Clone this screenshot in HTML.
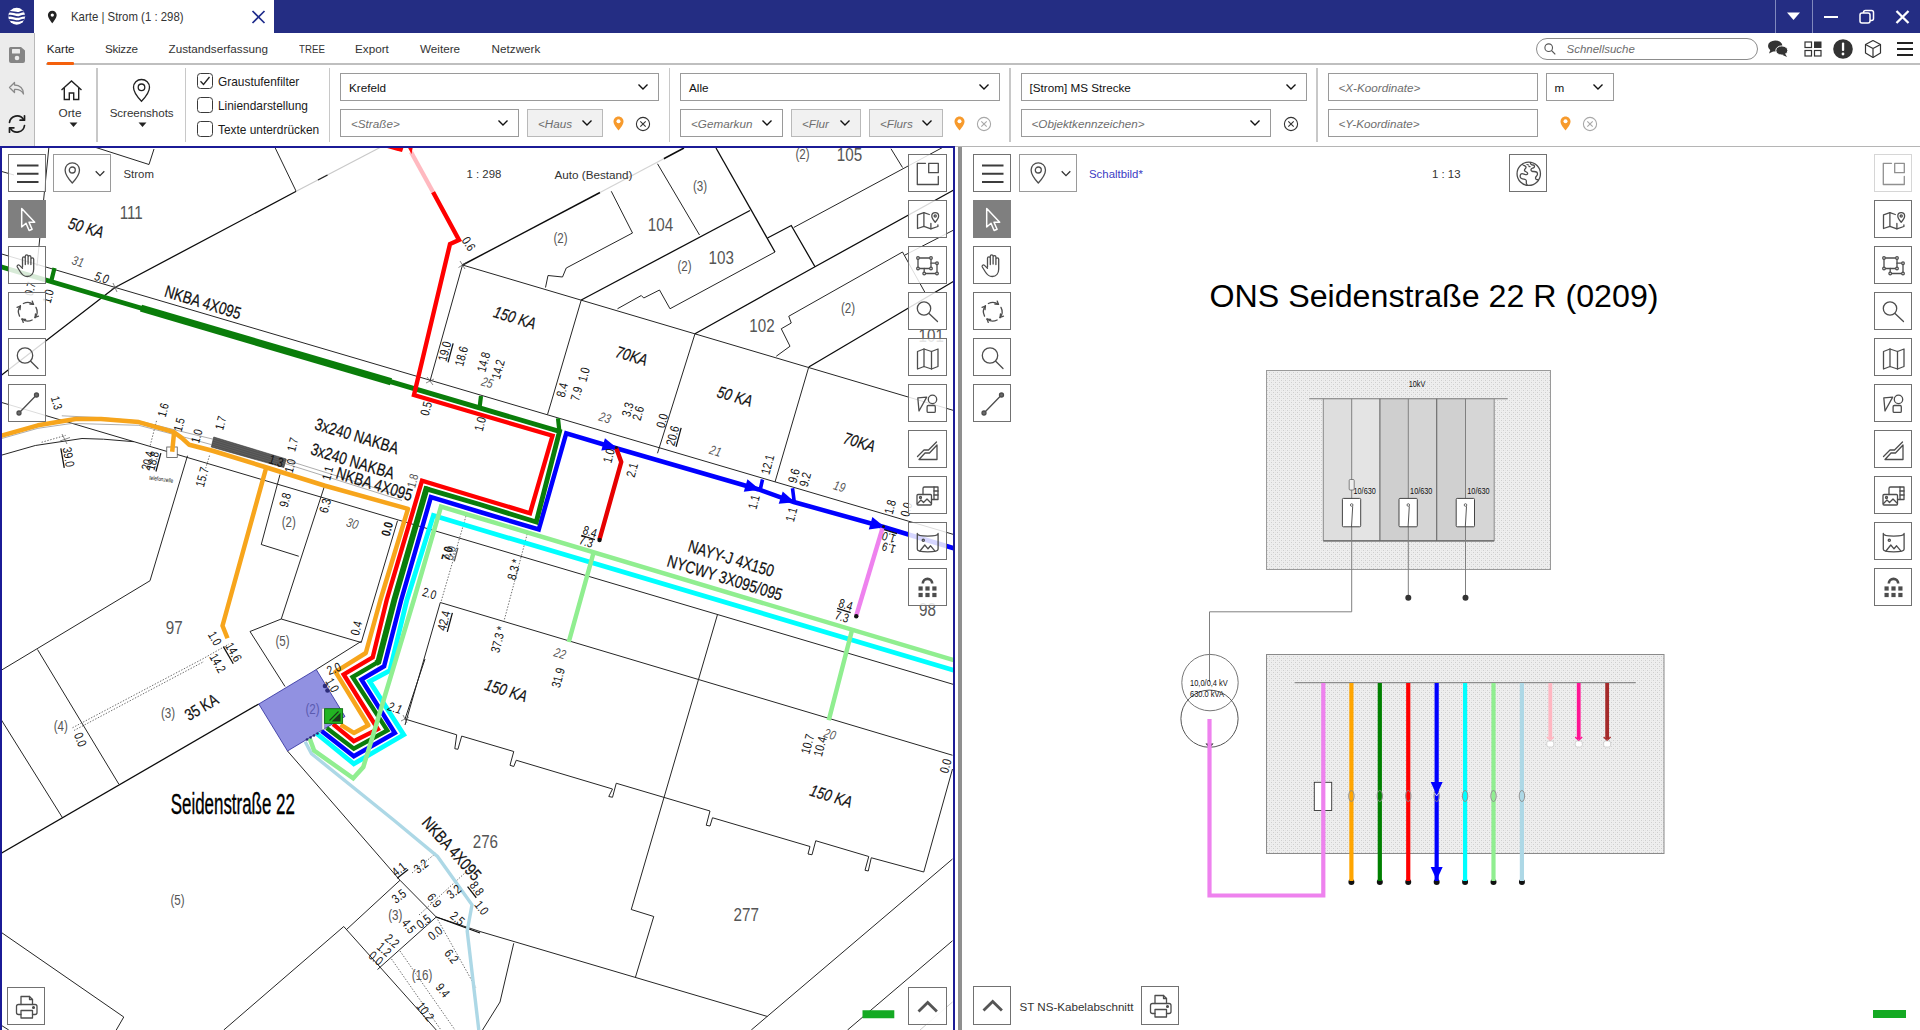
<!DOCTYPE html>
<html lang="de">
<head>
<meta charset="utf-8">
<title>Karte | Strom (1 : 298)</title>
<style>
*{box-sizing:border-box;margin:0;padding:0}
html,body{width:1920px;height:1030px;overflow:hidden;background:#fff}
body{position:relative;font-family:"Liberation Sans",sans-serif;color:#2b2b2b;font-size:11.6px}
.abs{position:absolute}
#titlebar{left:0;top:0;width:1920px;height:33px;background:#242d83}
#tab{left:34px;top:0;width:240px;height:33px;background:#fff}
#sidebar{left:0;top:33px;width:34.6px;height:113px;background:#ececec;border-right:1.3px solid #b9b9b9}
.menu span{position:absolute;top:42px;white-space:nowrap;font-size:11.7px;color:#333}
#menuline{left:46px;top:62.9px;width:1874px;height:1.8px;background:#bfbfbf}
#menuactive{left:46.5px;top:62px;width:27.5px;height:3.3px;background:#f4600c;border-radius:1px}
.vsep{position:absolute;top:68px;width:1.6px;height:74px;background:#c8c8c8}
.dd{position:absolute;border:1px solid #9a9a9a;background:#fff;height:27.5px;font-size:11.7px;color:#111;white-space:nowrap}
.dd.g{background:#f1f1f1;border-color:#b9b9b9}
.dd span{position:absolute;left:8px;top:7px}
.dd i{position:absolute;left:10px;top:6.9px;color:#6e6e6e;font-style:italic}
.dd svg{position:absolute;right:9px;top:8.9px}
.cb{position:absolute;left:197px;width:15.5px;height:15.5px;border:1.2px solid #3a3a3a;border-radius:3.5px;background:#fff}
.cbl{position:absolute;left:218px;font-size:11.9px;color:#1a1a1a;white-space:nowrap}
.tb{position:absolute;width:38.2px;height:38.2px;margin:-.35px 0 0 -.35px;border:1.65px solid #717171;background:rgba(255,255,255,.84)}
.tb.on{background:#7f7f7f;border-color:#7f7f7f}
.tb svg{position:absolute;left:0;top:0}
.lbl{position:absolute;font-size:11.4px;color:#333;white-space:nowrap}
</style>
</head>
<body>
<!-- TITLE BAR -->
<div id="titlebar" class="abs"></div>
<div id="tab" class="abs"></div>
<div id="sidebar" class="abs"></div>
<div id="menuline" class="abs"></div>
<div id="menuactive" class="abs"></div>
<!-- logo -->
<svg class="abs" style="left:6.600px;top:6.200px" width="19.400" height="20.400" viewBox="0 0 20 21">
<defs><clipPath id="lg"><circle cx="10" cy="10.5" r="8.7"/></clipPath></defs>
<circle cx="10" cy="10.5" r="8.7" fill="#fff"/>
<g clip-path="url(#lg)" fill="none" stroke="#242d83" stroke-width="1.7">
<path d="M0 6.6 C5 4.2 9 8.2 13 6.6 S18 5 21 6.2"/>
<path d="M0 10.6 C5 8.2 9 12.6 13 11 S18 9.2 21 10.4"/>
<path d="M0 14.8 C5 12.6 9 16.8 13 15.2 S18 13.4 21 14.6"/>
</g></svg>
<!-- tab -->
<svg class="abs" style="left:47px;top:9.600px" width="10.600" height="14.100" viewBox="0 0 12 16"><path d="M6 .8C3.2.8 1 3 1 5.8c0 3.600 5 9.400 5 9.400s5-5.800 5-9.400C11 3 8.800.8 6 .8zm0 6.900a1.900 1.900 0 1 1 0-3.800 1.900 1.900 0 0 1 0 3.800z" fill="#222"/></svg>
<div class="abs" style="left:70.6px;top:10.4px;font-size:12.2px;color:#333;white-space:nowrap;transform:scaleX(.935);transform-origin:0 0">Karte | Strom (1 : 298)</div>
<svg class="abs" style="left:251px;top:10px" width="15" height="14" viewBox="0 0 15 14"><path d="M1.500 1l12 12M13.500 1l-12 12" stroke="#1f2c8c" stroke-width="1.700" fill="none"/></svg>
<!-- window controls -->
<div class="abs" style="left:1775px;top:0;width:1px;height:33px;background:#8088bd"></div>
<div class="abs" style="left:1812px;top:0;width:1px;height:33px;background:#8088bd"></div>
<svg class="abs" style="left:1786px;top:11px" width="16" height="10" viewBox="0 0 16 10"><path d="M1 1.500h13L7.500 9z" fill="#fff"/></svg>
<div class="abs" style="left:1824px;top:15.5px;width:14px;height:2px;background:#fff"></div>
<svg class="abs" style="left:1859px;top:9px" width="16" height="16" viewBox="0 0 16 16"><rect x="1" y="4" width="10" height="10" rx="2" fill="none" stroke="#fff" stroke-width="1.500"/><path d="M4.500 4V3.500a2 2 0 0 1 2-2H12.500a2 2 0 0 1 2 2V9.500a2 2 0 0 1-2 2H11" fill="none" stroke="#fff" stroke-width="1.500"/></svg>
<svg class="abs" style="left:1895px;top:10px" width="15" height="14" viewBox="0 0 15 14"><path d="M1.500 1l12 12M13.500 1l-12 12" stroke="#fff" stroke-width="2.300" fill="none"/></svg>
<!-- sidebar icons -->
<svg class="abs" style="left:8px;top:46px" width="18" height="18" viewBox="0 0 18 18"><path d="M2.500 1h10.500l4 3.500V15a2 2 0 0 1-2 2H3a2 2 0 0 1-2-2V2.500A1.500 1.500 0 0 1 2.500 1z" fill="#858585"/><rect x="4" y="3" width="8" height="4.500" rx=".5" fill="#ececec"/><circle cx="9" cy="12" r="2.300" fill="#ececec"/></svg>
<svg class="abs" style="left:8px;top:80px" width="18" height="18" viewBox="0 0 18 18"><path d="M6.500 2.500L1.500 7.500l5 5v-3c4-.3 7 .8 9 4.500 0-5.500-3.500-9-9-9z" fill="none" stroke="#8a8a8a" stroke-width="1.300" stroke-linejoin="round"/></svg>
<svg class="abs" style="left:7px;top:114px" width="20" height="20" viewBox="0 0 20 20"><g fill="none" stroke="#1e1e1e" stroke-width="1.700" stroke-linecap="round" stroke-linejoin="round"><path d="M2.500 8.500A7.600 7.600 0 0 1 16.500 5.500"/><path d="M17.500 1.800v4.400h-4.400"/><path d="M17.500 11.500A7.600 7.600 0 0 1 3.500 14.500"/><path d="M2.500 18.200v-4.400h4.400"/></g></svg>
<!-- menu -->
<div class="menu">
<span style="left:46.7px;color:#222">Karte</span><span style="left:105px;letter-spacing:-.3px">Skizze</span><span style="left:168.6px">Zustandserfassung</span><span style="left:298.6px;transform:scaleX(.83);transform-origin:0 0">TREE</span><span style="left:355px">Export</span><span style="left:420px">Weitere</span><span style="left:491.6px">Netzwerk</span>
</div>
<!-- search -->
<div class="abs" style="left:1536px;top:38px;width:221.500px;height:22px;border:1px solid #8c8c8c;border-radius:11px;background:#fff"></div>
<svg class="abs" style="left:1543px;top:42px" width="14" height="14" viewBox="0 0 14 14"><circle cx="5.700" cy="5.700" r="3.800" fill="none" stroke="#555" stroke-width="1.100"/><path d="M8.500 8.500l3.800 3.800" stroke="#555" stroke-width="1.100"/></svg>
<div class="abs" style="left:1566.5px;top:42.5px;font-size:11.5px;font-style:italic;color:#6b6b6b">Schnellsuche</div>
<!-- top right icons -->
<svg class="abs" style="left:1767px;top:39px" width="22" height="20" viewBox="0 0 22 20"><ellipse cx="8.200" cy="7" rx="7.200" ry="5.600" fill="#333"/><path d="M3.500 10.500L2 14.500l5-2.500z" fill="#333"/><ellipse cx="14.800" cy="11.500" rx="6" ry="4.600" fill="#333" stroke="#fff" stroke-width="1"/><path d="M18 14.500l2 3.500-5-2.300z" fill="#333"/></svg>
<svg class="abs" style="left:1804px;top:41px" width="18" height="16" viewBox="0 0 18 16"><rect x="1" y="1" width="6.500" height="5.500" fill="none" stroke="#333" stroke-width="1.200"/><rect x="10" y=".5" width="7.500" height="6.500" fill="#333"/><rect x="1" y="9.500" width="6.500" height="5.500" fill="none" stroke="#333" stroke-width="1.200"/><rect x="10.500" y="9.500" width="6.500" height="5.500" fill="none" stroke="#333" stroke-width="1.200"/></svg>
<svg class="abs" style="left:1832px;top:38px" width="22" height="22" viewBox="0 0 22 22"><circle cx="11" cy="11" r="9.800" fill="#333"/><rect x="9.900" y="4.500" width="2.300" height="8.500" rx="1" fill="#fff"/><circle cx="11" cy="16" r="1.400" fill="#fff"/></svg>
<svg class="abs" style="left:1863px;top:39px" width="20" height="20" viewBox="0 0 20 20"><g fill="none" stroke="#333" stroke-width="1.200" stroke-linejoin="round"><path d="M10 1.500L17.500 5.500v8.500L10 18.500 2.500 14V5.500z"/><path d="M2.500 5.500L10 9.500l7.500-4M10 9.500v9"/></g></svg>
<svg class="abs" style="left:1896px;top:41px" width="18" height="16" viewBox="0 0 18 16"><path d="M1 2h16M1 8h16M1 14h16" stroke="#222" stroke-width="1.800"/></svg>
<!-- ribbon -->
<svg class="abs" style="left:60px;top:79px" width="23" height="24" viewBox="0 0 23 24"><path d="M1.500 11L11.500 2l10 9M4.300 9v11.500h5v-6.500h4.400v6.500h5V9" fill="none" stroke="#222" stroke-width="1.400" stroke-linejoin="miter"/></svg>
<div class="lbl" style="left:58.5px;top:106px;font-size:11.8px">Orte</div>
<svg class="abs" style="left:68.500px;top:121.700px" width="9" height="5.600" viewBox="0 0 8 5"><path d="M.5.500h7L4 4.500z" fill="#222"/></svg>
<div class="vsep" style="left:96.300px"></div>
<svg class="abs" style="left:132px;top:77.700px" width="19" height="25" viewBox="0 0 19 25"><path d="M9.500 1.500C5 1.500 1.500 5 1.500 9.300c0 5.700 8 14 8 14s8-8.300 8-14C17.500 5 14 1.500 9.500 1.500z" fill="none" stroke="#222" stroke-width="1.300"/><circle cx="9.500" cy="9.300" r="3.300" fill="none" stroke="#222" stroke-width="1.300"/></svg>
<div class="lbl" style="left:109.700px;top:106px;font-size:11.6px;letter-spacing:-.05px">Screenshots</div>
<svg class="abs" style="left:137.500px;top:121.700px" width="9" height="5.600" viewBox="0 0 8 5"><path d="M.5.500h7L4 4.500z" fill="#222"/></svg>
<div class="vsep" style="left:184.700px"></div>
<div class="cb" style="top:73px"></div>
<svg class="abs" style="left:199px;top:75px" width="12" height="12" viewBox="0 0 12 12"><path d="M1.500 6.300l3 3.200L10.500 2" fill="none" stroke="#222" stroke-width="1.300"/></svg>
<div class="cb" style="top:97px"></div>
<div class="cb" style="top:121px"></div>
<div class="cbl" style="top:75px">Graustufenfilter</div>
<div class="cbl" style="top:99px">Liniendarstellung</div>
<div class="cbl" style="top:123px">Texte unterdrücken</div>
<div class="vsep" style="left:328.700px"></div>
<div class="dd" style="left:340px;top:73px;width:319px"><span>Krefeld</span><svg width="12" height="8" viewBox="0 0 12 8"><path d="M1.500 1.500L6 6l4.500-4.500" fill="none" stroke="#111" stroke-width="1.400"/></svg></div>
<div class="dd" style="left:340px;top:109.200px;width:179px"><i>&lt;Straße&gt;</i><svg width="12" height="8" viewBox="0 0 12 8"><path d="M1.500 1.500L6 6l4.500-4.500" fill="none" stroke="#111" stroke-width="1.400"/></svg></div>
<div class="dd g" style="left:527px;top:109.200px;width:76px"><i>&lt;Haus</i><svg width="12" height="8" viewBox="0 0 12 8"><path d="M1.500 1.500L6 6l4.500-4.500" fill="none" stroke="#111" stroke-width="1.400"/></svg></div>
<svg class="abs pin" style="left:613px;top:116px" width="11" height="15" viewBox="0 0 11 15"><path d="M5.500 .5C2.700.5.500 2.700.500 5.400c0 3.500 5 9 5 9s5-5.500 5-9C10.500 2.700 8.300.5 5.500.5z" fill="#f79a2c"/><circle cx="5.500" cy="5.300" r="2" fill="#fff"/></svg>
<svg class="abs" style="left:635px;top:115.500px" width="16" height="16" viewBox="0 0 16 16"><circle cx="8" cy="8" r="6.600" fill="none" stroke="#333" stroke-width="1.100"/><path d="M5.300 5.300l5.400 5.400M10.700 5.300l-5.400 5.400" stroke="#333" stroke-width="1.100"/></svg>
<div class="vsep" style="left:668.800px"></div>
<div class="dd" style="left:680px;top:73px;width:319.500px"><span>Alle</span><svg width="12" height="8" viewBox="0 0 12 8"><path d="M1.500 1.500L6 6l4.500-4.500" fill="none" stroke="#111" stroke-width="1.400"/></svg></div>
<div class="dd" style="left:680px;top:109.200px;width:103px"><i>&lt;Gemarkun</i><svg width="12" height="8" viewBox="0 0 12 8"><path d="M1.500 1.500L6 6l4.500-4.500" fill="none" stroke="#111" stroke-width="1.400"/></svg></div>
<div class="dd g" style="left:791px;top:109.200px;width:70px"><i>&lt;Flur</i><svg width="12" height="8" viewBox="0 0 12 8"><path d="M1.500 1.500L6 6l4.500-4.500" fill="none" stroke="#111" stroke-width="1.400"/></svg></div>
<div class="dd g" style="left:869px;top:109.200px;width:74px"><i>&lt;Flurs</i><svg width="12" height="8" viewBox="0 0 12 8"><path d="M1.500 1.500L6 6l4.500-4.500" fill="none" stroke="#111" stroke-width="1.400"/></svg></div>
<svg class="abs pin" style="left:954px;top:116px" width="11" height="15" viewBox="0 0 11 15"><path d="M5.500 .5C2.700.5.500 2.700.500 5.400c0 3.500 5 9 5 9s5-5.500 5-9C10.500 2.700 8.300.5 5.500.5z" fill="#f79a2c"/><circle cx="5.500" cy="5.300" r="2" fill="#fff"/></svg>
<svg class="abs" style="left:975.500px;top:115.500px" width="16" height="16" viewBox="0 0 16 16"><circle cx="8" cy="8" r="6.600" fill="none" stroke="#a8a8a8" stroke-width="1.100"/><path d="M5.300 5.300l5.400 5.400M10.700 5.300l-5.400 5.400" stroke="#a8a8a8" stroke-width="1.100"/></svg>
<div class="vsep" style="left:1009.200px"></div>
<div class="dd" style="left:1020.500px;top:73px;width:286px"><span>[Strom] MS Strecke</span><svg width="12" height="8" viewBox="0 0 12 8"><path d="M1.500 1.500L6 6l4.500-4.500" fill="none" stroke="#111" stroke-width="1.400"/></svg></div>
<div class="dd" style="left:1020.500px;top:109.200px;width:250px"><i>&lt;Objektkennzeichen&gt;</i><svg width="12" height="8" viewBox="0 0 12 8"><path d="M1.500 1.500L6 6l4.500-4.500" fill="none" stroke="#111" stroke-width="1.400"/></svg></div>
<svg class="abs" style="left:1282.500px;top:115.500px" width="16" height="16" viewBox="0 0 16 16"><circle cx="8" cy="8" r="6.600" fill="none" stroke="#333" stroke-width="1.100"/><path d="M5.300 5.300l5.400 5.400M10.700 5.300l-5.400 5.400" stroke="#333" stroke-width="1.100"/></svg>
<div class="vsep" style="left:1316px"></div>
<div class="dd" style="left:1327.500px;top:73px;width:210px"><i>&lt;X-Koordinate&gt;</i></div>
<div class="dd" style="left:1545.500px;top:73px;width:68px"><span>m</span><svg width="12" height="8" viewBox="0 0 12 8"><path d="M1.500 1.500L6 6l4.500-4.500" fill="none" stroke="#111" stroke-width="1.400"/></svg></div>
<div class="dd" style="left:1327.500px;top:109.200px;width:210px"><i>&lt;Y-Koordinate&gt;</i></div>
<svg class="abs pin" style="left:1560px;top:116px" width="11" height="15" viewBox="0 0 11 15"><path d="M5.500 .5C2.700.5.500 2.700.500 5.400c0 3.500 5 9 5 9s5-5.500 5-9C10.500 2.700 8.300.5 5.500.5z" fill="#f79a2c"/><circle cx="5.500" cy="5.300" r="2" fill="#fff"/></svg>
<svg class="abs" style="left:1581.500px;top:115.500px" width="16" height="16" viewBox="0 0 16 16"><circle cx="8" cy="8" r="6.600" fill="none" stroke="#a8a8a8" stroke-width="1.100"/><path d="M5.300 5.300l5.400 5.400M10.700 5.300l-5.400 5.400" stroke="#a8a8a8" stroke-width="1.100"/></svg>

<svg class="abs" style="left:0;top:0" width="1920" height="1030" viewBox="0 0 1920 1030">
<defs><clipPath id="mapclip"><rect x="0" y="146" width="955" height="884"/></clipPath>
<pattern id="hatch" width="2" height="2" patternUnits="userSpaceOnUse" patternTransform="rotate(17)"><rect width="2" height="2" fill="#6a6a6a"/><rect width="2" height="1" fill="#444"/></pattern>
</defs>
<g clip-path="url(#mapclip)" fill="none" stroke-linecap="butt" stroke-linejoin="miter">
<!-- thin grey/black cadastral lines -->
<g stroke="#262626" stroke-width="1">
<path d="M0 253.500L953.750 534.500"/>
<path d="M462.500 265L953.750 410.500"/>
<path d="M0 402L953.750 684.500"/>
<path d="M0 455.600L35.300 445.500L82 438.500L103.500 439.200L133.800 441.700"/>
<path d="M440.300 602.500L952.500 755.250"/>
<path d="M440.300 602.500L405 725"/>
<path d="M462.500 265L430 381"/>
<path d="M581.250 300L551.250 402L547.500 414.500"/>
<path d="M695 333.750L657.500 453.250"/>
<path d="M808.750 367L775 482"/>
<path d="M49 146L37 266"/>
<path d="M0 171L14 175"/>
<path d="M96 147.500L149 164.500L154 149"/>
<path d="M275 147.500L296 191"/>
<path d="M657.500 163.750L699.500 235"/>
<path d="M793.750 227.500L942.500 147.500"/>
<path d="M891 148.750L902.500 167.500"/>
<path d="M902.500 252L788.750 316.250L791.250 323L781.250 328.750L790 346.250L776.250 356.250"/>
<path d="M902.500 252L925 292.500"/>
<path d="M905 255L953.750 230"/>
<path d="M775 252L670 308.750L659.500 290L643.750 298L641.250 295.500L617.500 308.750"/>
<path d="M611.250 191.250L632.500 233L566.250 268L562.500 277L548 275.500L545.500 287.500"/>
<path d="M187.500 455.750L150 580.750L20 659L0 671"/>
<path d="M37.500 649.500L118.750 784"/>
<path d="M0 717.750L62.500 817.750"/>
<path d="M280 474.500L261.250 544.500L298.750 556.250"/>
<path d="M325 484.500L281.250 619L250 631.500"/>
<path d="M281.250 619L361.250 642.500"/>
<path d="M397.500 520.750L361.250 642.500"/>
<path d="M250 631.500L285 686.500"/>
<path d="M287.500 751L400 880.250L436.250 917"/>
<path d="M400 880.250L346 930"/>
<path d="M436.250 917L377.500 969.500"/>
<path d="M425 659L405 719"/>
<path d="M316.250 669.500L360.800 641.600"/>
<path d="M405 719L456.700 734.800L454.800 748.700L457.900 749.300L461.700 736.100L513.750 751.500L510 765.250L513.750 766.500L516.250 760.250L612.500 789L608.750 796.500L612.500 797.250L616.250 783.250L710 811L706.250 825.250L710 826L712.500 817.750L810 846.500L808 854L812 854.750L815.750 840.750L868.750 856.500L865 870.250L868.250 871L871.250 857.750L923.750 872L952.500 769"/>
<path d="M717.500 614.500L631.250 909.500L653.750 916.500L635.500 977"/>
<path d="M436.250 917L480 931.500L767.500 1016.500"/>
<path d="M513.750 943.250L500 1002L482.500 1030"/>
<path d="M952.500 859L751.250 1030"/>
<path d="M952.500 940.750L847.500 1030"/>
<path d="M0 931.500L123.750 1017L116.250 1030"/>
<path d="M0 1024.500L8.750 1030"/>
<path d="M223.750 1030L343.750 926.500L436.250 1030"/>
</g>
<path d="M952.500 1002L920 1030" stroke="#bbb" stroke-width=".8"/>
<!-- main black lines -->
<g stroke="#0c0c0c" stroke-width="1.300">
<path d="M0 376.250L115 287.500L296.250 191.250"/>
<path d="M581.250 300L750 210.500"/>
<path d="M716 148L775 252"/>
<path d="M767.500 238L791.250 225.500L815 266.750"/>
<path d="M695 333.750L815 266.750L953.750 190"/>
<path d="M808.750 367L953.750 281.250"/>
<path d="M0 854L258.750 704"/>
<path d="M436.250 917L480 933"/>
</g>
<path d="M296.250 191.250L380 147.500" stroke="#c9c9c9" stroke-width="1.200"/>
<path d="M318 180L327.500 175" stroke="#222" stroke-width="1.300"/>
<g stroke="#0c0c0c" stroke-width="1.450"><path d="M462.500 265L600 192.500"/><path d="M663.750 158.750L684 148"/></g>
<path d="M600 192.500L663.750 158.750" stroke="#d4d4d4" stroke-width="1.300"/>
<g stroke="#555" stroke-width=".7">
<path d="M113 283L117 292M111 289.500L119 285.500"/>
<path d="M460 261L465 269M458.500 267.500L466.500 262.500"/>
<path d="M427 377L433 385M426 383L434 379"/>
<path d="M62 434L67 444M60 441L70 437.500"/>
<path d="M403 715L407 723M401 721L409 717"/>
</g>
<!-- dotted dimension lines -->
<g stroke="#444" stroke-width=".8" stroke-dasharray="1.400 1.600">
<path d="M72.500 727.750L202.500 659L229 644"/>
<path d="M74 730.500L204 661.500"/>
<path d="M528 531L503.750 622"/>
<path d="M466 516L441.250 601"/>
<path d="M412 873L436 853"/>
<path d="M419 915L466 872"/>
<path d="M436.250 917L476 988"/>
<path d="M400 951L455 1030"/>
<path d="M391.500 959L441 1030"/>
<path d="M41.600 442.300L65.600 435.400"/>
<path d="M156.500 420.900L150.200 445.500"/>
<path d="M209.500 455.600L205.700 468.200"/>
</g>
</g>
<g clip-path="url(#mapclip)" fill="none" stroke-linejoin="miter" stroke-linecap="butt">
<!-- purple building -->
<path d="M258.750 704L316.250 669.500L345 716.500L287.500 751z" fill="#9191e1" stroke="#2a2a9a" stroke-width=".8"/>
<!-- hatched rect -->
<path d="M213.750 437L286.250 459L283.750 467.500L211.250 447z" fill="#5e5e5e" stroke="#333" stroke-width=".6"/>
<g stroke="#3a3a3a" stroke-width=".35"><path d="M213.250 439L285.750 461"/><path d="M212.750 441L285.250 463"/><path d="M212.250 443L284.750 465"/><path d="M211.750 445L284.250 467"/></g>
<!-- thin lines along cable text -->
<g stroke="#8a8a8a" stroke-width=".7"><path d="M286 460L404 497"/><path d="M285 463.500L402 500.500"/><path d="M61.800 415.800L101 417.700L138.800 420.900L174.100 429.700L213.200 439.200"/><path d="M72 423.400L138.800 425.300L189.300 438.500L212 444.800"/><path d="M0 439L37.900 428.300L72 423.400"/></g>
<rect x="166.750" y="447" width="10.500" height="10.500" fill="#fff" stroke="#555" stroke-width=".8"/>
<!-- light blue -->
<path d="M305.200 741.700L311.500 753.700L393.600 820L437.500 856.500L472 904.800L467.200 931L478.800 1030" stroke="#add8e6" stroke-width="3.400"/>
<!-- cyan -->
<path d="M953.750 670.200L480 529.500L433.400 515.400L406.900 600L389.800 670.700L369.600 681.400L403.700 734.800L353.800 763.800L316.600 733.500" stroke="#00ffff" stroke-width="4.800"/>
<!-- blue -->
<path d="M953.750 548.250L883.750 527L793.750 502L758.750 489.500L616.250 448.250L566.250 433.250L538.750 529.500L480 512L430.900 497.100L401.200 600L384.100 666.200L361.400 679.500L394.800 732.900L353.800 756.200L321.600 731" stroke="#0000ff" stroke-width="4.500"/>
<path d="M762.500 479.500L760 490.750M792.500 488.250L794.250 502" stroke="#0000ff" stroke-width="3.600"/>
<g fill="#0000ff" stroke="none">
<path d="M0 0L-15 -6.500L-15 6.500z" transform="translate(617.500 448.600) rotate(16.400)"/>
<path d="M0 0L-15 -6.500L-15 6.500z" transform="translate(760 489.800) rotate(16.400)"/>
<path d="M0 0L-15 -6.500L-15 6.500z" transform="translate(795 502.300) rotate(18)"/>
<path d="M0 0L-15 -6.500L-15 6.500z" transform="translate(885 527.300) rotate(16)"/>
</g>
<!-- green -->
<path d="M378.400 661.800L352.600 677L387.300 730.400L353.800 748.700L326.700 727.900" stroke="#0a7d0a" stroke-width="4.400"/>
<path d="M0 266.500L559.500 431.500L536.250 522L480 504.500L426.400 488.900L424 497" stroke="#0a7d0a" stroke-width="4.900"/>
<path d="M427.100 486.500L426.400 488.900L394.300 600L378.400 661.800L376 663.200" stroke="#0a7d0a" stroke-width="5.900"/>
<path d="M141 308.100L391 381.800" stroke="#0a7d0a" stroke-width="7.200"/>
<path d="M559.500 432.500L558 418.250M481 396L479.500 408M54.500 268L51 282" stroke="#0a7d0a" stroke-width="4.200"/>
<!-- red -->
<path d="M433 192L459 240L450 244L414 395L480 414.500L552.500 435.750L530 513.250L480 498.250L422 480.700L386.700 600L372.700 657.400L343.700 674.400L377.800 729.100L353.800 741.100L333 724.100" stroke="#ff0000" stroke-width="4.400"/>
<path d="M411 152L433 192" stroke="#ffb9c0" stroke-width="4.300"/>
<path d="M380 146L404 146L402 152L396 150.500z" fill="#ff0000"/>
<path d="M407 146L413 146L411.500 154z" fill="#ff0000"/>
<path d="M616.250 448.250L621.250 462L599.500 539.500" stroke="#e60000" stroke-width="4.400" stroke-linejoin="round"/>
<!-- violet -->
<path d="M882.500 528.250L856.250 615.750" stroke="#ee82ee" stroke-width="4.400"/>
<!-- orange -->
<path d="M0 436L37.900 425.300L75.700 419L101 419L138.800 422.100L174.100 432.200L181.700 437.900L189.300 444.800L212.500 450.750L265 467L325 485.750L408 508.800L380.400 600L365.800 653L335.500 671.900L368.300 725.300L353.800 732.900L340.600 724.700" stroke="#f7a51c" stroke-width="4.500" stroke-linejoin="round"/>
<path d="M174.100 432.200L172.200 451.800M266.250 467.500L222.500 625.750L227.500 638.250" stroke="#f7a51c" stroke-width="4.500" stroke-linejoin="round"/>
<!-- light green -->
<path d="M953.750 660.200L480 518.250L441 506.600L413.800 600L374.600 730L363.300 767L353.200 778.300L314.100 750.600L309.700 738.600" stroke="#90ee90" stroke-width="4.500"/>
<path d="M593.750 552L568.750 642M852.500 628.250L828.750 720.250" stroke="#90ee90" stroke-width="4.500"/>
<!-- dots -->
<g fill="#111" stroke="none"><circle cx="599.500" cy="540" r="2.200"/><circle cx="856.250" cy="616.300" r="2.200"/><circle cx="616.300" cy="447.500" r="1.500"/><circle cx="883.500" cy="526.500" r="1.500"/></g>
<g fill="#2c2c7a" stroke="none"><circle cx="325" cy="686" r="2.300"/><circle cx="327.500" cy="690.500" r="2.300"/><circle cx="307" cy="739.500" r="1.300"/><circle cx="310.500" cy="737.500" r="1.300"/><circle cx="314" cy="735.500" r="1.300"/><circle cx="317.500" cy="733.500" r="1.300"/></g>
<!-- flag -->
<rect x="322" y="708.500" width="2.200" height="21" fill="#f2f2f2" stroke="#888" stroke-width=".4"/>
<rect x="324.600" y="708.700" width="18" height="14.700" fill="#22b422" stroke="#0d6e0d" stroke-width=".9"/>
<path d="M329.500 720.500L338.500 711.500M333 721L340 714L340 721z" stroke="#1a3a1a" stroke-width="1.100" fill="#1a3a1a"/>
<!-- status bar -->
<rect x="862.500" y="1010.250" width="31.800" height="8" fill="#14aa23"/>
</g>

<g clip-path="url(#mapclip)" font-family="'Liberation Sans',sans-serif" text-anchor="middle">
<text transform="translate(131.25 212) scale(0.8 1)" y="6.802" font-size="19" fill="#555">111</text>
<text transform="translate(86.25 227.5) rotate(17) scale(0.8 1)" y="5.907" font-size="16.5" fill="#111" font-style="italic" stroke="#111" stroke-width=".22">50 KA</text>
<text transform="translate(78 261.25) rotate(17) scale(0.8 1)" y="4.654" font-size="13" fill="#555" font-style="italic">31</text>
<text transform="translate(101.75 277.5) rotate(17) scale(0.8 1)" y="4.5466" font-size="12.7" fill="#111" font-style="italic">5.0</text>
<text transform="translate(30 288.75) rotate(-75) scale(0.8 1)" y="4.3676" font-size="12.2" fill="#111">0.7</text>
<text transform="translate(48 296.25) rotate(-75) scale(0.8 1)" y="4.3676" font-size="12.2" fill="#111">1.0</text>
<text transform="translate(203 302) rotate(17) scale(0.797 1)" y="6.086" font-size="17" fill="#111" stroke="#111" stroke-width=".22">NKBA 4X095</text>
<text transform="translate(468.75 243.75) rotate(58) scale(0.8 1)" y="4.5466" font-size="12.7" fill="#111">0.6</text>
<text transform="translate(444.5 351.25) rotate(-75) scale(0.8 1)" y="4.5466" font-size="12.7" fill="#111" text-decoration="underline">19.0</text>
<text transform="translate(461.25 356.25) rotate(-75) scale(0.8 1)" y="4.5466" font-size="12.7" fill="#111">18.6</text>
<text transform="translate(483.5 362) rotate(-75) scale(0.8 1)" y="4.5466" font-size="12.7" fill="#111">14.8</text>
<text transform="translate(498 369.3) rotate(-75) scale(0.8 1)" y="4.5466" font-size="12.7" fill="#111">14.2</text>
<text transform="translate(487.3 382.4) rotate(17) scale(0.8 1)" y="4.654" font-size="13" fill="#555" font-style="italic">25</text>
<text transform="translate(56.8 402.8) rotate(75) scale(0.8 1)" y="4.3676" font-size="12.2" fill="#111">1.3</text>
<text transform="translate(163 410) rotate(-75) scale(0.8 1)" y="4.3676" font-size="12.2" fill="#111">1.6</text>
<text transform="translate(179 424.6) rotate(-75) scale(0.8 1)" y="4.3676" font-size="12.2" fill="#111">1.5</text>
<text transform="translate(220.5 423) rotate(-75) scale(0.8 1)" y="4.3676" font-size="12.2" fill="#111">1.7</text>
<text transform="translate(196.6 436) rotate(-75) scale(0.8 1)" y="4.3676" font-size="12.2" fill="#111">1.0</text>
<text transform="translate(425.9 408.6) rotate(-75) scale(0.8 1)" y="4.5466" font-size="12.7" fill="#111">0.5</text>
<text transform="translate(480 424) rotate(-75) scale(0.8 1)" y="4.5466" font-size="12.7" fill="#111">1.0</text>
<text transform="translate(357 435.8) rotate(17) scale(0.797 1)" y="6.086" font-size="17" fill="#111" stroke="#111" stroke-width=".22">3x240 NAKBA</text>
<text transform="translate(352.8 460.9) rotate(17) scale(0.797 1)" y="6.086" font-size="17" fill="#111" stroke="#111" stroke-width=".22">3x240 NAKBA</text>
<text transform="translate(374.5 483.8) rotate(17) scale(0.797 1)" y="6.086" font-size="17" fill="#111" stroke="#111" stroke-width=".22">NKBA 4X095</text>
<text transform="translate(292.5 444.5) rotate(-75) scale(0.8 1)" y="4.3676" font-size="12.2" fill="#111">1.7</text>
<text transform="translate(276.25 460.75) rotate(17) scale(0.8 1)" y="4.654" font-size="13" fill="#111">1.3</text>
<text transform="translate(290 465.75) rotate(-75) scale(0.8 1)" y="4.3676" font-size="12.2" fill="#111">1.0</text>
<text transform="translate(327.5 473.25) rotate(-75) scale(0.8 1)" y="4.3676" font-size="12.2" fill="#111">1.1</text>
<text transform="translate(412.5 480.75) rotate(-75) scale(0.8 1)" y="4.3676" font-size="12.2" fill="#555">1.8</text>
<text transform="translate(68.75 457) rotate(80) scale(0.8 1)" y="4.5466" font-size="12.7" fill="#111" text-decoration="underline">39.0</text>
<text transform="translate(147.5 460.75) rotate(-75) scale(0.8 1)" y="4.3676" font-size="12.2" fill="#111">20.4</text>
<text transform="translate(152.5 460.75) rotate(-75) scale(0.8 1)" y="4.3676" font-size="12.2" fill="#111" text-decoration="underline">18.8</text>
<text transform="translate(161.25 479) rotate(8) scale(0.8 1)" y="2.148" font-size="6" fill="#111">telefonzelle</text>
<text transform="translate(202 477) rotate(-75) scale(0.8 1)" y="4.5466" font-size="12.7" fill="#111">15.7</text>
<text transform="translate(285 500) rotate(-75) scale(0.8 1)" y="4.5466" font-size="12.7" fill="#111">9.8</text>
<text transform="translate(325 505.75) rotate(-75) scale(0.8 1)" y="4.5466" font-size="12.7" fill="#111">6.3</text>
<text transform="translate(288.75 522) scale(0.8 1)" y="5.191" font-size="14.5" fill="#555">(2)</text>
<text transform="translate(352.5 523.25) rotate(17) scale(0.8 1)" y="4.654" font-size="13" fill="#555" font-style="italic">30</text>
<text transform="translate(387 529) rotate(-75) scale(0.8 1)" y="4.5466" font-size="12.7" fill="#111" font-weight="bold">0.0</text>
<text transform="translate(447 553.5) rotate(-75) scale(0.8 1)" y="4.5466" font-size="12.7" fill="#111" font-weight="bold">7.0</text>
<text transform="translate(450 553) rotate(-75) scale(0.8 1)" y="4.5466" font-size="12.7" fill="#555" text-decoration="underline">3.0</text>
<text transform="translate(429.5 593.25) rotate(17) scale(0.8 1)" y="4.475" font-size="12.5" fill="#111">2.0</text>
<text transform="translate(443.75 620.75) rotate(-75) scale(0.8 1)" y="4.5466" font-size="12.7" fill="#111" text-decoration="underline">42.4</text>
<text transform="translate(356.25 628.25) rotate(-75) scale(0.8 1)" y="4.5466" font-size="12.7" fill="#111">0.4</text>
<text transform="translate(174.25 627) scale(0.8 1)" y="6.802" font-size="19" fill="#555">97</text>
<text transform="translate(282.5 640.75) scale(0.8 1)" y="5.191" font-size="14.5" fill="#555">(5)</text>
<text transform="translate(215 638.25) rotate(60) scale(0.8 1)" y="4.5466" font-size="12.7" fill="#111">1.0</text>
<text transform="translate(233.75 652) rotate(60) scale(0.8 1)" y="4.5466" font-size="12.7" fill="#111" text-decoration="underline">14.6</text>
<text transform="translate(217.9 663) rotate(60) scale(0.8 1)" y="4.5466" font-size="12.7" fill="#111">14.2</text>
<text transform="translate(605 417.5) rotate(17) scale(0.8 1)" y="4.654" font-size="13" fill="#555" font-style="italic">23</text>
<text transform="translate(627.5 409.5) rotate(-75) scale(0.8 1)" y="4.5466" font-size="12.7" fill="#111">3.3</text>
<text transform="translate(638 413.25) rotate(-75) scale(0.8 1)" y="4.5466" font-size="12.7" fill="#111">2.6</text>
<text transform="translate(662 420.75) rotate(-75) scale(0.8 1)" y="4.5466" font-size="12.7" fill="#111">0.0</text>
<text transform="translate(672.5 435.75) rotate(-75) scale(0.8 1)" y="4.5466" font-size="12.7" fill="#111" text-decoration="underline">20.6</text>
<text transform="translate(715.5 450.75) rotate(17) scale(0.8 1)" y="4.654" font-size="13" fill="#555" font-style="italic">21</text>
<text transform="translate(608.75 455.75) rotate(-75) scale(0.8 1)" y="4.5466" font-size="12.7" fill="#111">1.0</text>
<text transform="translate(632 470) rotate(-75) scale(0.8 1)" y="4.5466" font-size="12.7" fill="#111">2.1</text>
<text transform="translate(767.5 464.5) rotate(-75) scale(0.8 1)" y="4.5466" font-size="12.7" fill="#111">12.1</text>
<text transform="translate(793.75 475.75) rotate(-75) scale(0.8 1)" y="4.5466" font-size="12.7" fill="#111">9.6</text>
<text transform="translate(805 479.5) rotate(-75) scale(0.8 1)" y="4.5466" font-size="12.7" fill="#111">9.2</text>
<text transform="translate(839.5 486.25) rotate(17) scale(0.8 1)" y="4.654" font-size="13" fill="#555" font-style="italic">19</text>
<text transform="translate(753.75 502) rotate(-75) scale(0.8 1)" y="4.5466" font-size="12.7" fill="#111">1.1</text>
<text transform="translate(791.25 514.5) rotate(-75) scale(0.8 1)" y="4.5466" font-size="12.7" fill="#111">1.1</text>
<text transform="translate(890 507) rotate(-75) scale(0.8 1)" y="4.5466" font-size="12.7" fill="#111">1.8</text>
<text transform="translate(906.25 509.5) rotate(-75) scale(0.8 1)" y="4.5466" font-size="12.7" fill="#111">0.0</text>
<text transform="translate(859.5 442) rotate(17) scale(0.8 1)" y="5.907" font-size="16.5" fill="#111" font-style="italic" stroke="#111" stroke-width=".22">70KA</text>
<text transform="translate(590 531.5) rotate(17) scale(0.8 1)" y="4.5466" font-size="12.7" fill="#111" text-decoration="underline">8.4</text>
<text transform="translate(586.25 541.5) rotate(17) scale(0.8 1)" y="4.5466" font-size="12.7" fill="#111">7.3</text>
<text transform="translate(845.75 604.5) rotate(17) scale(0.8 1)" y="4.5466" font-size="12.7" fill="#111" text-decoration="underline">8.4</text>
<text transform="translate(842 616.5) rotate(17) scale(0.8 1)" y="4.5466" font-size="12.7" fill="#111">7.3</text>
<text transform="translate(731.25 558.25) rotate(17) scale(0.797 1)" y="6.086" font-size="17" fill="#111" stroke="#111" stroke-width=".22">NAYY-J 4X150</text>
<text transform="translate(725 577.5) rotate(17) scale(0.797 1)" y="6.086" font-size="17" fill="#111" stroke="#111" stroke-width=".22">NYCWY 3X095/095</text>
<text transform="translate(513.75 569.5) rotate(-75) scale(0.8 1)" y="4.5466" font-size="12.7" fill="#111">8.3 *</text>
<text transform="translate(498 639.5) rotate(-75) scale(0.8 1)" y="4.5466" font-size="12.7" fill="#111">37.3 *</text>
<text transform="translate(560 653.25) rotate(17) scale(0.8 1)" y="4.654" font-size="13" fill="#555" font-style="italic">22</text>
<text transform="translate(927.5 609.5) scale(0.8 1)" y="6.802" font-size="19" fill="#555">98</text>
<text transform="translate(888.75 537.5) rotate(197) scale(0.8 1)" y="4.3676" font-size="12.2" fill="#111" text-decoration="underline">1.0</text>
<text transform="translate(888.75 548) rotate(197) scale(0.8 1)" y="4.3676" font-size="12.2" fill="#111">1.9</text>
<text transform="translate(700 186.25) scale(0.8 1)" y="5.191" font-size="14.5" fill="#555">(3)</text>
<text transform="translate(660.5 224.5) scale(0.8 1)" y="6.802" font-size="19" fill="#555">104</text>
<text transform="translate(560.5 238) scale(0.8 1)" y="5.191" font-size="14.5" fill="#555">(2)</text>
<text transform="translate(721.25 257) scale(0.8 1)" y="6.802" font-size="19" fill="#555">103</text>
<text transform="translate(684.5 266.25) scale(0.8 1)" y="5.191" font-size="14.5" fill="#555">(2)</text>
<text transform="translate(762 325.5) scale(0.8 1)" y="6.802" font-size="19" fill="#555">102</text>
<text transform="translate(848 308) scale(0.8 1)" y="5.191" font-size="14.5" fill="#555">(2)</text>
<text transform="translate(802.5 154) scale(0.8 1)" y="5.191" font-size="14.5" fill="#555">(2)</text>
<text transform="translate(849.5 154) scale(0.8 1)" y="6.802" font-size="19" fill="#555">105</text>
<text transform="translate(515 317.5) rotate(17) scale(0.8 1)" y="5.907" font-size="16.5" fill="#111" font-style="italic" stroke="#111" stroke-width=".22">150 KA</text>
<text transform="translate(631.75 355.75) rotate(17) scale(0.8 1)" y="5.907" font-size="16.5" fill="#111" font-style="italic" stroke="#111" stroke-width=".22">70KA</text>
<text transform="translate(735 396.25) rotate(17) scale(0.8 1)" y="5.907" font-size="16.5" fill="#111" font-style="italic" stroke="#111" stroke-width=".22">50 KA</text>
<text transform="translate(562 390) rotate(-75) scale(0.8 1)" y="4.5466" font-size="12.7" fill="#111">8.4</text>
<text transform="translate(576.25 393.75) rotate(-75) scale(0.8 1)" y="4.5466" font-size="12.7" fill="#111">7.9</text>
<text transform="translate(583.75 374.5) rotate(-75) scale(0.8 1)" y="4.5466" font-size="12.7" fill="#111">1.0</text>
<text transform="translate(931.25 335) scale(0.8 1)" y="6.802" font-size="19" fill="#555">101</text>
<text transform="translate(201.25 707) rotate(-31) scale(0.8 1)" y="5.907" font-size="16.5" fill="#111" stroke="#111" stroke-width=".22">35 KA</text>
<text transform="translate(168 713.25) scale(0.8 1)" y="5.191" font-size="14.5" fill="#555">(3)</text>
<text transform="translate(60.75 726) scale(0.8 1)" y="5.191" font-size="14.5" fill="#555">(4)</text>
<text transform="translate(80.5 739.5) rotate(68) scale(0.8 1)" y="4.5466" font-size="12.7" fill="#111">0.0</text>
<text transform="translate(312.5 709) scale(0.8 1)" y="5.191" font-size="14.5" fill="#5a5ab0">(2)</text>
<text transform="translate(333.75 668.5) rotate(-22) scale(0.8 1)" y="4.5466" font-size="12.7" fill="#111">2.0</text>
<text transform="translate(332.5 685) rotate(60) scale(0.8 1)" y="4.5466" font-size="12.7" fill="#111">1.0</text>
<text transform="translate(395 707.75) rotate(17) scale(0.8 1)" y="4.5466" font-size="12.7" fill="#111" font-style="italic">2.1</text>
<text transform="translate(177.5 900.25) scale(0.8 1)" y="5.191" font-size="14.5" fill="#555">(5)</text>
<text transform="translate(452 848.5) rotate(48) scale(0.797 1)" y="6.086" font-size="17" fill="#111" stroke="#111" stroke-width=".22">NKBA 4X095</text>
<text transform="translate(485.4 841.6) scale(0.8 1)" y="6.802" font-size="19" fill="#555">276</text>
<text transform="translate(398.75 869) rotate(-38) scale(0.8 1)" y="4.5466" font-size="12.7" fill="#111" text-decoration="underline">4.1</text>
<text transform="translate(420.75 866) rotate(-38) scale(0.8 1)" y="4.5466" font-size="12.7" fill="#111">3.2</text>
<text transform="translate(398.75 896) rotate(-38) scale(0.8 1)" y="4.5466" font-size="12.7" fill="#111">3.5</text>
<text transform="translate(434.5 900.25) rotate(52) scale(0.8 1)" y="4.5466" font-size="12.7" fill="#111">6.9</text>
<text transform="translate(453.75 891.5) rotate(-38) scale(0.8 1)" y="4.5466" font-size="12.7" fill="#111">3.2</text>
<text transform="translate(476.9 888.3) rotate(52) scale(0.8 1)" y="4.5466" font-size="12.7" fill="#111" text-decoration="underline">8.8</text>
<text transform="translate(481.7 907.7) rotate(52) scale(0.8 1)" y="4.5466" font-size="12.7" fill="#111">1.0</text>
<text transform="translate(457.5 918.3) rotate(40) scale(0.8 1)" y="4.5466" font-size="12.7" fill="#111">2.5</text>
<text transform="translate(423.5 921.3) rotate(-38) scale(0.8 1)" y="4.5466" font-size="12.7" fill="#111">0.5</text>
<text transform="translate(409 926) rotate(52) scale(0.8 1)" y="4.5466" font-size="12.7" fill="#111">4.5</text>
<text transform="translate(395.3 914.9) scale(0.8 1)" y="5.191" font-size="14.5" fill="#555">(3)</text>
<text transform="translate(435 933) rotate(-38) scale(0.8 1)" y="4.5466" font-size="12.7" fill="#111">0.0</text>
<text transform="translate(392.4 940.7) rotate(40) scale(0.8 1)" y="4.5466" font-size="12.7" fill="#111">2.2</text>
<text transform="translate(384.3 949.4) rotate(40) scale(0.8 1)" y="4.5466" font-size="12.7" fill="#111">1.2</text>
<text transform="translate(376 958) rotate(40) scale(0.8 1)" y="4.5466" font-size="12.7" fill="#111">0.0</text>
<text transform="translate(451.6 956.2) rotate(52) scale(0.8 1)" y="4.5466" font-size="12.7" fill="#111">6.2</text>
<text transform="translate(422 974.7) scale(0.8 1)" y="5.191" font-size="14.5" fill="#555">(16)</text>
<text transform="translate(443 990.2) rotate(52) scale(0.8 1)" y="4.5466" font-size="12.7" fill="#111">9.4</text>
<text transform="translate(425.4 1011.5) rotate(52) scale(0.8 1)" y="4.5466" font-size="12.7" fill="#111">10.2</text>
<text transform="translate(506.25 690.25) rotate(17) scale(0.8 1)" y="5.907" font-size="16.5" fill="#111" font-style="italic" stroke="#111" stroke-width=".22">150 KA</text>
<text transform="translate(558 677.75) rotate(-75) scale(0.8 1)" y="4.5466" font-size="12.7" fill="#111">31.9</text>
<text transform="translate(807.5 744) rotate(-75) scale(0.8 1)" y="4.5466" font-size="12.7" fill="#111">10.7</text>
<text transform="translate(820 746.5) rotate(-75) scale(0.8 1)" y="4.5466" font-size="12.7" fill="#111">10.4</text>
<text transform="translate(830 734) rotate(17) scale(0.8 1)" y="4.654" font-size="13" fill="#555" font-style="italic">20</text>
<text transform="translate(945.5 766) rotate(-75) scale(0.8 1)" y="4.5466" font-size="12.7" fill="#111">0.0</text>
<text transform="translate(831.25 796) rotate(17) scale(0.8 1)" y="5.907" font-size="16.5" fill="#111" font-style="italic" stroke="#111" stroke-width=".22">150 KA</text>
<text transform="translate(746.25 914) scale(0.8 1)" y="6.802" font-size="19" fill="#555">277</text>
<text transform="translate(232.8 814) scale(0.586 1)" font-size="28.9" fill="#000" stroke="#000" stroke-width=".35">Seidenstraße 22</text>
</g>
</svg>
<div class="abs" style="left:0;top:146px;width:955px;height:2.200px;background:#1b1b96"></div>
<div class="abs" style="left:0;top:146px;width:1.800px;height:884px;background:#1b1b96"></div>
<div class="abs" style="left:953px;top:146px;width:2px;height:884px;background:#1b1b96"></div>
<div class="abs" style="left:955px;top:145.500px;width:965px;height:1.500px;background:#b5b5b5"></div>
<div class="abs" style="left:957.500px;top:147px;width:4.200px;height:883px;background:#8f8f8f"></div>
<div class="tb " style="left:8px;top:154.5px;width:38.2px;"><svg width="37.5" height="37.500" viewBox="0 0 37.500 37.500"><path d="M8 10.500h21.500M8 18.750h21.500M8 27h21.500" stroke="#3c3c3c" stroke-width="2.100" fill="none"/></svg></div>
<div class="tb on" style="left:8px;top:200.5px;width:38.2px;"><svg width="37.5" height="37.500" viewBox="0 0 37.500 37.500"><path d="M12.700 7.500V26l4.300-3.700 3.100 7.200 3-1.300-3.100-7h5.700z" fill="none" stroke="#fff" stroke-width="1.500" stroke-linejoin="round"/></svg></div>
<div class="tb " style="left:8px;top:246.5px;width:38.2px;"><svg width="37.5" height="37.500" viewBox="0 0 37.500 37.500"><path fill="none" stroke="#4d4d4d" stroke-width="1.3" stroke-linejoin="round" stroke-linecap="round" d="M13.500 20V11.300a1.400 1.400 0 0 1 2.800 0V17.500M16.300 17V9.200a1.400 1.400 0 0 1 2.800 0V17M19.100 17V10a1.400 1.400 0 0 1 2.800 0V17.500M21.900 17.500V12.300a1.400 1.400 0 0 1 2.800 0V22c0 4.500-2.500 7.500-6.500 7.500-3.500 0-5-1.500-6.800-4.500L8.300 20c-.8-1.500 1-2.800 2.200-1.600l3 3"/></svg></div>
<div class="tb " style="left:8px;top:292.5px;width:38.2px;"><svg width="37.5" height="37.500" viewBox="0 0 37.500 37.500"><g fill="none" stroke="#4d4d4d" stroke-width="1.3" stroke-linejoin="round" stroke-linecap="round"><path d="M14.38 10.54A9.3 9.3 0 0 1 24.48 11.42"/><path d="M24.48 11.42L23.22 8.05"/><path d="M24.48 11.42L20.90 11.01"/><path d="M26.96 14.38A9.3 9.3 0 0 1 26.08 24.48"/><path d="M26.08 24.48L29.45 23.22"/><path d="M26.08 24.48L26.49 20.90"/><path d="M23.12 26.96A9.3 9.3 0 0 1 13.02 26.08"/><path d="M13.02 26.08L14.28 29.45"/><path d="M13.02 26.08L16.60 26.49"/><path d="M10.54 23.12A9.3 9.3 0 0 1 11.42 13.02"/><path d="M11.42 13.02L8.05 14.28"/><path d="M11.42 13.02L11.01 16.60"/></g></svg></div>
<div class="tb " style="left:8px;top:338.5px;width:38.2px;"><svg width="37.5" height="37.500" viewBox="0 0 37.500 37.500"><g fill="none" stroke="#4d4d4d" stroke-width="1.3" stroke-linejoin="round" stroke-linecap="round"><circle cx="16" cy="16.500" r="7.700"/><path d="M21.700 22.200L29 29.500"/></g></svg></div>
<div class="tb " style="left:8px;top:384.5px;width:38.2px;"><svg width="37.5" height="37.500" viewBox="0 0 37.500 37.500"><g fill="none" stroke="#4d4d4d" stroke-width="1.3" stroke-linejoin="round" stroke-linecap="round"><path d="M10.500 27.500L27 10.500"/><circle cx="10" cy="28" r="2" fill="#6a6a6a"/><circle cx="27.500" cy="10" r="2" fill="#6a6a6a"/></g></svg></div>
<div class="tb " style="left:973px;top:154.5px;width:38.2px;"><svg width="37.5" height="37.500" viewBox="0 0 37.500 37.500"><path d="M8 10.500h21.500M8 18.750h21.500M8 27h21.500" stroke="#3c3c3c" stroke-width="2.100" fill="none"/></svg></div>
<div class="tb on" style="left:973px;top:200.5px;width:38.2px;"><svg width="37.5" height="37.500" viewBox="0 0 37.500 37.500"><path d="M12.700 7.500V26l4.300-3.700 3.100 7.200 3-1.300-3.100-7h5.700z" fill="none" stroke="#fff" stroke-width="1.500" stroke-linejoin="round"/></svg></div>
<div class="tb " style="left:973px;top:246.5px;width:38.2px;"><svg width="37.5" height="37.500" viewBox="0 0 37.500 37.500"><path fill="none" stroke="#4d4d4d" stroke-width="1.3" stroke-linejoin="round" stroke-linecap="round" d="M13.500 20V11.300a1.400 1.400 0 0 1 2.800 0V17.500M16.300 17V9.200a1.400 1.400 0 0 1 2.800 0V17M19.100 17V10a1.400 1.400 0 0 1 2.800 0V17.500M21.900 17.500V12.300a1.400 1.400 0 0 1 2.800 0V22c0 4.500-2.500 7.500-6.500 7.500-3.500 0-5-1.500-6.800-4.500L8.300 20c-.8-1.500 1-2.800 2.200-1.600l3 3"/></svg></div>
<div class="tb " style="left:973px;top:292.5px;width:38.2px;"><svg width="37.5" height="37.500" viewBox="0 0 37.500 37.500"><g fill="none" stroke="#4d4d4d" stroke-width="1.3" stroke-linejoin="round" stroke-linecap="round"><path d="M14.38 10.54A9.3 9.3 0 0 1 24.48 11.42"/><path d="M24.48 11.42L23.22 8.05"/><path d="M24.48 11.42L20.90 11.01"/><path d="M26.96 14.38A9.3 9.3 0 0 1 26.08 24.48"/><path d="M26.08 24.48L29.45 23.22"/><path d="M26.08 24.48L26.49 20.90"/><path d="M23.12 26.96A9.3 9.3 0 0 1 13.02 26.08"/><path d="M13.02 26.08L14.28 29.45"/><path d="M13.02 26.08L16.60 26.49"/><path d="M10.54 23.12A9.3 9.3 0 0 1 11.42 13.02"/><path d="M11.42 13.02L8.05 14.28"/><path d="M11.42 13.02L11.01 16.60"/></g></svg></div>
<div class="tb " style="left:973px;top:338.5px;width:38.2px;"><svg width="37.5" height="37.500" viewBox="0 0 37.500 37.500"><g fill="none" stroke="#4d4d4d" stroke-width="1.3" stroke-linejoin="round" stroke-linecap="round"><circle cx="16" cy="16.500" r="7.700"/><path d="M21.700 22.200L29 29.500"/></g></svg></div>
<div class="tb " style="left:973px;top:384.5px;width:38.2px;"><svg width="37.5" height="37.500" viewBox="0 0 37.500 37.500"><g fill="none" stroke="#4d4d4d" stroke-width="1.3" stroke-linejoin="round" stroke-linecap="round"><path d="M10.500 27.500L27 10.500"/><circle cx="10" cy="28" r="2" fill="#6a6a6a"/><circle cx="27.500" cy="10" r="2" fill="#6a6a6a"/></g></svg></div>
<div class="tb " style="left:908.75px;top:154.5px;width:38.2px;"><svg width="37.5" height="37.500" viewBox="0 0 37.500 37.500"><g fill="none" stroke="#4d4d4d" stroke-width="1.3" stroke-linejoin="round" stroke-linecap="round" stroke-linejoin="miter"><path d="M16.500 8.300H8.300V29.500H29.300V21.500"/><rect x="19.700" y="8.300" width="9.600" height="9.400"/></g></svg></div>
<div class="tb " style="left:908.75px;top:200.5px;width:38.2px;"><svg width="37.5" height="37.500" viewBox="0 0 37.500 37.500"><g fill="none" stroke="#4d4d4d" stroke-width="1.3" stroke-linejoin="round" stroke-linecap="round"><path d="M20.300 13.500L14.900 11.700 8.500 13.800V27.500l6.400-2.100 7 2.400 7-2.300V24"/><path d="M14.900 11.700V25.400M21.900 27.800V22.500"/><path d="M26.200 11.600c-1.900 0-3.400 1.500-3.400 3.400 0 2.400 3.400 6.200 3.400 6.200s3.400-3.800 3.400-6.200c0-1.900-1.500-3.400-3.400-3.400z" fill="#fff"/><circle cx="26.200" cy="15" r="1.100"/></g></svg></div>
<div class="tb " style="left:908.75px;top:246.5px;width:38.2px;"><svg width="37.5" height="37.500" viewBox="0 0 37.500 37.500"><g fill="none" stroke="#4d4d4d" stroke-width="1.3" stroke-linejoin="round" stroke-linecap="round"><rect x="9" y="11" width="13" height="10.500"/><path d="M22 16.200h6v10.300H15.200v-5"/><circle cx="9" cy="11" r="1.300" fill="#fff"/><circle cx="22" cy="11" r="1.300" fill="#fff"/><circle cx="9" cy="21.500" r="1.300" fill="#fff"/><circle cx="22" cy="21.500" r="1.300" fill="#fff"/><circle cx="28" cy="16.200" r="1.300" fill="#fff"/><circle cx="28" cy="26.500" r="1.300" fill="#fff"/><circle cx="15.200" cy="26.500" r="1.300" fill="#fff"/></g></svg></div>
<div class="tb " style="left:908.75px;top:292.5px;width:38.2px;"><svg width="37.5" height="37.500" viewBox="0 0 37.500 37.500"><g fill="none" stroke="#4d4d4d" stroke-width="1.3" stroke-linejoin="round" stroke-linecap="round"><circle cx="15" cy="15.500" r="6.700"/><path d="M20 20.500L28.500 28.500"/></g></svg></div>
<div class="tb " style="left:908.75px;top:338.5px;width:38.2px;"><svg width="37.5" height="37.500" viewBox="0 0 37.500 37.500"><g fill="none" stroke="#4d4d4d" stroke-width="1.3" stroke-linejoin="round" stroke-linecap="round"><path d="M8.500 12.500l6.500-2.500 7.500 2.500 6.500-2.500v17.500l-6.500 2.500-7.500-2.500-6.500 2.500z"/><path d="M15 10v17.500M22.500 12.500V30"/></g></svg></div>
<div class="tb " style="left:908.75px;top:384.5px;width:38.2px;"><svg width="37.5" height="37.500" viewBox="0 0 37.500 37.500"><g fill="none" stroke="#4d4d4d" stroke-width="1.3" stroke-linejoin="round" stroke-linecap="round"><path d="M8.800 12.800l8.900-.7-7.700 13.900z"/><circle cx="23.500" cy="14.400" r="4.200"/><rect x="18.100" y="20.500" width="8.200" height="6.900" rx="1.200"/></g></svg></div>
<div class="tb " style="left:908.75px;top:430.5px;width:38.2px;"><svg width="37.5" height="37.500" viewBox="0 0 37.500 37.500"><g fill="none" stroke="#4d4d4d" stroke-width="1.3" stroke-linejoin="round" stroke-linecap="round" stroke-linejoin="miter"><path d="M8.500 25.500l6.500-6.500h4.500l8-8"/><path d="M10 28.500l6-6.500h4.500l7.500-8v14.500z"/></g></svg></div>
<div class="tb " style="left:908.75px;top:476.5px;width:38.2px;"><svg width="37.5" height="37.500" viewBox="0 0 37.500 37.500"><g fill="none" stroke="#4d4d4d" stroke-width="1.3" stroke-linejoin="round" stroke-linecap="round"><rect x="8" y="17.500" width="14.500" height="10.500" rx="1"/><path d="M8.500 26.500l3.500-3.500 2.500 2.500 3.500-3.500 4 4"/><circle cx="11.500" cy="20.500" r="1"/><path d="M14 17.500V11.500a1.500 1.500 0 0 1 1.500-1.500H25"/><rect x="25" y="10" width="4" height="12.500"/><path d="M25 14h4M25 18h4M22.500 22.500H25"/></g></svg></div>
<div class="tb " style="left:908.75px;top:522.5px;width:38.2px;"><svg width="37.5" height="37.500" viewBox="0 0 37.500 37.500"><g fill="none" stroke="#4d4d4d" stroke-width="1.3" stroke-linejoin="round" stroke-linecap="round"><path d="M8.300 10.500c0 3.500 20.800 3.500 20.800 0v15.800c0 3.500-20.800 3.500-20.800 0z"/><path d="M11 28l4.800-6 3.200 3.800 2.600-3 4.400 5.300"/><circle cx="14.300" cy="17.300" r="1.100"/></g></svg></div>
<div class="tb " style="left:908.75px;top:568.5px;width:38.2px;"><svg width="37.5" height="37.500" viewBox="0 0 37.500 37.500"><g fill="#4d4d4d" stroke="none"><rect x="9.500" y="17.400" width="4.200" height="4.200"/><rect x="16.400" y="17.400" width="4.200" height="4.200"/><rect x="23.300" y="17.400" width="4.200" height="4.200"/><rect x="9.500" y="23.900" width="4.200" height="4.200"/><rect x="16.400" y="23.900" width="4.200" height="4.200"/><rect x="23.300" y="23.900" width="4.200" height="4.200"/></g><path d="M13.800 14.600a4.700 4.700 0 0 1 9.400 0" fill="none" stroke="#4d4d4d" stroke-width="2.600"/></svg></div>
<div class="tb " style="left:1874.3px;top:154.5px;width:38.2px;border-color:#bdbdbd;opacity:.62;"><svg width="37.5" height="37.500" viewBox="0 0 37.500 37.500"><g fill="none" stroke="#4d4d4d" stroke-width="1.3" stroke-linejoin="round" stroke-linecap="round" stroke-linejoin="miter"><path d="M16.500 8.300H8.300V29.500H29.300V21.500"/><rect x="19.700" y="8.300" width="9.600" height="9.400"/></g></svg></div>
<div class="tb " style="left:1874.3px;top:200.5px;width:38.2px;"><svg width="37.5" height="37.500" viewBox="0 0 37.500 37.500"><g fill="none" stroke="#4d4d4d" stroke-width="1.3" stroke-linejoin="round" stroke-linecap="round"><path d="M20.300 13.500L14.900 11.700 8.500 13.800V27.500l6.400-2.100 7 2.400 7-2.300V24"/><path d="M14.900 11.700V25.400M21.900 27.800V22.500"/><path d="M26.200 11.600c-1.900 0-3.400 1.500-3.400 3.400 0 2.400 3.400 6.200 3.400 6.200s3.400-3.800 3.400-6.200c0-1.900-1.500-3.400-3.400-3.400z" fill="#fff"/><circle cx="26.200" cy="15" r="1.100"/></g></svg></div>
<div class="tb " style="left:1874.3px;top:246.5px;width:38.2px;"><svg width="37.5" height="37.500" viewBox="0 0 37.500 37.500"><g fill="none" stroke="#4d4d4d" stroke-width="1.3" stroke-linejoin="round" stroke-linecap="round"><rect x="9" y="11" width="13" height="10.500"/><path d="M22 16.200h6v10.300H15.200v-5"/><circle cx="9" cy="11" r="1.300" fill="#fff"/><circle cx="22" cy="11" r="1.300" fill="#fff"/><circle cx="9" cy="21.500" r="1.300" fill="#fff"/><circle cx="22" cy="21.500" r="1.300" fill="#fff"/><circle cx="28" cy="16.200" r="1.300" fill="#fff"/><circle cx="28" cy="26.500" r="1.300" fill="#fff"/><circle cx="15.200" cy="26.500" r="1.300" fill="#fff"/></g></svg></div>
<div class="tb " style="left:1874.3px;top:292.5px;width:38.2px;"><svg width="37.5" height="37.500" viewBox="0 0 37.500 37.500"><g fill="none" stroke="#4d4d4d" stroke-width="1.3" stroke-linejoin="round" stroke-linecap="round"><circle cx="15" cy="15.500" r="6.700"/><path d="M20 20.500L28.500 28.500"/></g></svg></div>
<div class="tb " style="left:1874.3px;top:338.5px;width:38.2px;"><svg width="37.5" height="37.500" viewBox="0 0 37.500 37.500"><g fill="none" stroke="#4d4d4d" stroke-width="1.3" stroke-linejoin="round" stroke-linecap="round"><path d="M8.500 12.500l6.500-2.500 7.500 2.500 6.500-2.500v17.500l-6.500 2.500-7.500-2.500-6.500 2.500z"/><path d="M15 10v17.500M22.500 12.500V30"/></g></svg></div>
<div class="tb " style="left:1874.3px;top:384.5px;width:38.2px;"><svg width="37.5" height="37.500" viewBox="0 0 37.500 37.500"><g fill="none" stroke="#4d4d4d" stroke-width="1.3" stroke-linejoin="round" stroke-linecap="round"><path d="M8.800 12.800l8.900-.7-7.700 13.900z"/><circle cx="23.500" cy="14.400" r="4.200"/><rect x="18.100" y="20.500" width="8.200" height="6.900" rx="1.200"/></g></svg></div>
<div class="tb " style="left:1874.3px;top:430.5px;width:38.2px;"><svg width="37.5" height="37.500" viewBox="0 0 37.500 37.500"><g fill="none" stroke="#4d4d4d" stroke-width="1.3" stroke-linejoin="round" stroke-linecap="round" stroke-linejoin="miter"><path d="M8.500 25.500l6.500-6.500h4.500l8-8"/><path d="M10 28.500l6-6.500h4.500l7.500-8v14.500z"/></g></svg></div>
<div class="tb " style="left:1874.3px;top:476.5px;width:38.2px;"><svg width="37.5" height="37.500" viewBox="0 0 37.500 37.500"><g fill="none" stroke="#4d4d4d" stroke-width="1.3" stroke-linejoin="round" stroke-linecap="round"><rect x="8" y="17.500" width="14.500" height="10.500" rx="1"/><path d="M8.500 26.500l3.500-3.500 2.500 2.500 3.500-3.500 4 4"/><circle cx="11.500" cy="20.500" r="1"/><path d="M14 17.500V11.500a1.500 1.500 0 0 1 1.500-1.500H25"/><rect x="25" y="10" width="4" height="12.500"/><path d="M25 14h4M25 18h4M22.500 22.500H25"/></g></svg></div>
<div class="tb " style="left:1874.3px;top:522.5px;width:38.2px;"><svg width="37.5" height="37.500" viewBox="0 0 37.500 37.500"><g fill="none" stroke="#4d4d4d" stroke-width="1.3" stroke-linejoin="round" stroke-linecap="round"><path d="M8.300 10.500c0 3.500 20.800 3.500 20.800 0v15.800c0 3.500-20.800 3.500-20.800 0z"/><path d="M11 28l4.800-6 3.200 3.800 2.600-3 4.400 5.300"/><circle cx="14.300" cy="17.300" r="1.100"/></g></svg></div>
<div class="tb " style="left:1874.3px;top:568.5px;width:38.2px;"><svg width="37.5" height="37.500" viewBox="0 0 37.500 37.500"><g fill="#4d4d4d" stroke="none"><rect x="9.500" y="17.400" width="4.200" height="4.200"/><rect x="16.400" y="17.400" width="4.200" height="4.200"/><rect x="23.300" y="17.400" width="4.200" height="4.200"/><rect x="9.500" y="23.900" width="4.200" height="4.200"/><rect x="16.400" y="23.900" width="4.200" height="4.200"/><rect x="23.300" y="23.900" width="4.200" height="4.200"/></g><path d="M13.800 14.600a4.700 4.700 0 0 1 9.400 0" fill="none" stroke="#4d4d4d" stroke-width="2.600"/></svg></div>
<div class="tb" style="left:52.9px;top:154.500px;width:58.500px;border-color:#9a9a9a;border-width:1.100px"><svg width="58" height="37.500" viewBox="0 0 58 37.500"><g transform="translate(18.300 7.800)"><g fill="none" stroke="#4d4d4d" stroke-width="1.3" stroke-linejoin="round" stroke-linecap="round" stroke="#3c3c3c"><path d="M0 0C-4 0-7.200 3.200-7.200 7.200c0 5.300 7.200 13 7.200 13s7.200-7.700 7.200-13C7.200 3.200 4 0 0 0z"/><circle cx="0" cy="7.200" r="3"/></g></g><path d="M41.700 16.300l4.300 4.300 4.300-4.300" fill="none" stroke="#333" stroke-width="1.300"/></svg></div>
<div class="tb" style="left:1018.9px;top:154.500px;width:58.500px;border-color:#9a9a9a;border-width:1.100px"><svg width="58" height="37.500" viewBox="0 0 58 37.500"><g transform="translate(18.300 7.800)"><g fill="none" stroke="#4d4d4d" stroke-width="1.3" stroke-linejoin="round" stroke-linecap="round" stroke="#3c3c3c"><path d="M0 0C-4 0-7.200 3.200-7.200 7.200c0 5.300 7.200 13 7.200 13s7.200-7.700 7.200-13C7.200 3.200 4 0 0 0z"/><circle cx="0" cy="7.200" r="3"/></g></g><path d="M41.700 16.300l4.300 4.300 4.300-4.300" fill="none" stroke="#333" stroke-width="1.300"/></svg></div>
<div class="tb " style="left:7.5px;top:987px;width:38.2px;"><svg width="37.5" height="37.500" viewBox="0 0 37.500 37.500"><g fill="none" stroke="#4d4d4d" stroke-width="1.3" stroke-linejoin="round" stroke-linecap="round"><path d="M13 16.500V8.500h8.500l3 3v5"/><path d="M21.500 8.500v3h3"/><path d="M13 26.500h-2.500a2 2 0 0 1-2-2v-6a2 2 0 0 1 2-2H27a2 2 0 0 1 2 2v6a2 2 0 0 1-2 2H24.500"/><rect x="13" y="22.500" width="11.500" height="7.500"/><circle cx="25.500" cy="19.500" r=".9" fill="#4d4d4d"/></g></svg></div>
<div class="tb " style="left:908.75px;top:987px;width:38.2px;"><svg width="37.5" height="37.500" viewBox="0 0 37.500 37.500"><path d="M9.500 23.500l9.200-9 9.200 9" fill="none" stroke="#555" stroke-width="2.800" stroke-linejoin="miter"/></svg></div>
<div class="tb " style="left:973px;top:986.7px;width:38.2px;"><svg width="37.5" height="37.500" viewBox="0 0 37.500 37.500"><path d="M9.500 23.500l9.200-9 9.200 9" fill="none" stroke="#555" stroke-width="2.800" stroke-linejoin="miter"/></svg></div>
<div class="tb " style="left:1141.25px;top:986.7px;width:38.2px;"><svg width="37.5" height="37.500" viewBox="0 0 37.500 37.500"><g fill="none" stroke="#4d4d4d" stroke-width="1.3" stroke-linejoin="round" stroke-linecap="round"><path d="M13 16.500V8.500h8.500l3 3v5"/><path d="M21.500 8.500v3h3"/><path d="M13 26.500h-2.500a2 2 0 0 1-2-2v-6a2 2 0 0 1 2-2H27a2 2 0 0 1 2 2v6a2 2 0 0 1-2 2H24.500"/><rect x="13" y="22.500" width="11.500" height="7.500"/><circle cx="25.500" cy="19.500" r=".9" fill="#4d4d4d"/></g></svg></div>
<div class="tb " style="left:1509px;top:154.5px;width:38.2px;"><svg width="37.5" height="37.500" viewBox="0 0 37.500 37.500"><g fill="none" stroke="#4d4d4d" stroke-width="1.3" stroke-linejoin="round" stroke-linecap="round" stroke-width="1.200"><circle cx="18.750" cy="18.750" r="11.700"/><path d="M12.500 9.500c1 1.500 3 1 3.500 2.500s-2 2-1.500 3.500 2.500 1 3 2.500-1 2-2.500 1.500-3-1.500-4-.5-1.500 3.500.5 4.500 3.500 0 4.500 1.500-.5 3.500 1 4.500"/><path d="M20.500 7.500c-.5 1.500 1 2.500 2.500 2.500s2 1.500 1 2.500-2.500.5-3 2 1.500 2 3 2 3.500.5 3.500 2.500-2 2.500-2 4 1.500 2 2.500 1.500"/><path d="M17 9.500l1.500.5M19 11.500l1 .2"/></g></svg></div>
<div class="lbl" style="left:123.500px;top:167.500px">Strom</div>
<div class="lbl" style="left:466.500px;top:167.500px">1 : 298</div>
<div class="lbl" style="left:554.500px;top:167.500px;font-size:11.700px">Auto (Bestand)</div>
<div class="lbl" style="left:1089px;top:167.500px;color:#3b3bc4">Schaltbild*</div>
<div class="lbl" style="left:1432px;top:167.500px">1 : 13</div>
<div class="lbl" style="left:1019.500px;top:999.500px;font-size:11.600px">ST NS-Kabelabschnitt</div>
<div class="abs" style="left:1873px;top:1010px;width:33px;height:8px;background:#14aa23"></div>
<svg class="abs" style="left:962px;top:147px" width="958" height="883" viewBox="962 147 958 883">
<defs><pattern id="dots" width="4" height="4" patternUnits="userSpaceOnUse"><rect width="4" height="4" fill="#eeeeee"/><rect x="1" y="0" width="1" height="1" fill="#cecece"/><rect x="3" y="2" width="1" height="1" fill="#cecece"/><rect x="1" y="2" width="1" height="1" fill="#e6e6e6"/><rect x="3" y="0" width="1" height="1" fill="#e6e6e6"/></pattern></defs>
<text x="1209.500" y="306.500" font-family="'Liberation Sans',sans-serif" font-size="30.800" fill="#000" textLength="449" lengthAdjust="spacingAndGlyphs">ONS Seidenstraße 22 R (0209)</text>
<rect x="1266.500" y="370.500" width="284" height="199" fill="url(#dots)" stroke="#9a9a9a" stroke-width="1"/>
<text x="1417" y="387.500" text-anchor="middle" font-family="'Liberation Sans',sans-serif" font-size="8.600" fill="#111" transform="translate(1417 0) scale(.85 1) translate(-1417 0)">10kV</text>
<rect x="1323.3" y="398.700" width="28.4" height="142.200" fill="#dedede"/>
<rect x="1351.7" y="398.700" width="28.2" height="142.200" fill="#e4e4e4"/>
<rect x="1379.9" y="398.700" width="28.4" height="142.200" fill="#cfcfcf"/>
<rect x="1408.3" y="398.700" width="28.4" height="142.200" fill="#d5d5d5"/>
<rect x="1436.7" y="398.700" width="28.8" height="142.200" fill="#d0d0d0"/>
<rect x="1465.5" y="398.700" width="28.7" height="142.200" fill="#d6d6d6"/>
<path d="M1309.200 398.700H1507.700" stroke="#7a7a7a" stroke-width="1.100" fill="none"/>
<path d="M1323.300 398.700V540.900H1494.200V398.700" stroke="#8a8a8a" stroke-width="1" fill="none"/>
<path d="M1379.900 398.700V540.900M1436.700 398.700V540.900M1323.300 540.900H1494.200" stroke="#666" stroke-width="1.100" fill="none"/>
<path d="M1351.700 398.700V611.800H1209.500V654.500" stroke="#808080" stroke-width="1" fill="none"/>
<path d="M1408.300 398.700V597.700M1465.500 398.700V597.700" stroke="#808080" stroke-width="1" fill="none"/>
<circle cx="1408.300" cy="597.700" r="3" fill="#333"/><circle cx="1465.500" cy="597.700" r="3" fill="#333"/>
<rect x="1342.4" y="498.400" width="18.300" height="28.400" rx="1" fill="#fff" stroke="#444" stroke-width="1"/>
<path d="M1352.7 506.300L1351.5 526.800" stroke="#444" stroke-width=".9" fill="none"/>
<circle cx="1351.7" cy="505" r="1.300" fill="#fff" stroke="#333" stroke-width=".7"/>
<text transform="translate(1353.5 494.300) scale(.85 1)" font-family="'Liberation Sans',sans-serif" font-size="8.600" fill="#111">10/630</text>
<rect x="1399" y="498.400" width="18.300" height="28.400" rx="1" fill="#fff" stroke="#444" stroke-width="1"/>
<path d="M1409.3 506.300L1408.1 526.800" stroke="#444" stroke-width=".9" fill="none"/>
<circle cx="1408.3" cy="505" r="1.300" fill="#fff" stroke="#333" stroke-width=".7"/>
<text transform="translate(1410.1 494.300) scale(.85 1)" font-family="'Liberation Sans',sans-serif" font-size="8.600" fill="#111">10/630</text>
<rect x="1456.2" y="498.400" width="18.300" height="28.400" rx="1" fill="#fff" stroke="#444" stroke-width="1"/>
<path d="M1466.5 506.300L1465.3 526.800" stroke="#444" stroke-width=".9" fill="none"/>
<circle cx="1465.5" cy="505" r="1.300" fill="#fff" stroke="#333" stroke-width=".7"/>
<text transform="translate(1467.3 494.300) scale(.85 1)" font-family="'Liberation Sans',sans-serif" font-size="8.600" fill="#111">10/630</text>
<rect x="1349.200" y="479.500" width="5" height="10.500" rx="1" fill="#eee" stroke="#555" stroke-width=".7"/>
<circle cx="1210" cy="682.600" r="28.200" fill="none" stroke="#777" stroke-width="1"/>
<circle cx="1209.500" cy="718.700" r="28.600" fill="none" stroke="#555" stroke-width="1"/>
<path d="M1209.500 654.500V682" stroke="#808080" stroke-width="1"/>
<text transform="translate(1190 685.500) scale(.86 1)" font-family="'Liberation Sans',sans-serif" font-size="8.700" fill="#111">10,0/0,4 kV</text>
<text transform="translate(1190 696.500) scale(.86 1)" font-family="'Liberation Sans',sans-serif" font-size="8.700" fill="#111">630.0 kVA</text>
<path d="M1205.500 743.500h8l-4 5z" fill="#222"/>
<rect x="1266.500" y="654.500" width="397.500" height="199" fill="url(#dots)" stroke="#8a8a8a" stroke-width="1"/>
<path d="M1294.600 682.600H1635.800" stroke="#8c8c8c" stroke-width="1.400"/>
<rect x="1314.300" y="782.300" width="17.400" height="28.200" fill="#fff" stroke="#333" stroke-width=".9"/>
<path d="M1209.500 719V895.500H1323.300V683" fill="none" stroke="#ee82ee" stroke-width="4.200"/>
<circle cx="1351.4" cy="882" r="3" fill="#111"/>
<path d="M1351.4 683V881" stroke="#ffa500" stroke-width="4.200"/>
<ellipse cx="1351.4" cy="796" rx="2.700" ry="5.500" fill="none" stroke="#8a8a8a" stroke-width=".9"/>
<circle cx="1379.82" cy="882" r="3" fill="#111"/>
<path d="M1379.82 683V881" stroke="#008000" stroke-width="4.200"/>
<ellipse cx="1379.82" cy="796" rx="2.700" ry="5.500" fill="none" stroke="#8a8a8a" stroke-width=".9"/>
<circle cx="1408.24" cy="882" r="3" fill="#111"/>
<path d="M1408.24 683V881" stroke="#ff0000" stroke-width="4.200"/>
<ellipse cx="1408.24" cy="796" rx="2.700" ry="5.500" fill="none" stroke="#8a8a8a" stroke-width=".9"/>
<circle cx="1436.66" cy="882" r="3" fill="#111"/>
<path d="M1436.66 683V881" stroke="#0000ff" stroke-width="4.200"/>
<ellipse cx="1436.66" cy="796" rx="2.700" ry="5.500" fill="none" stroke="#8a8a8a" stroke-width=".9"/>
<circle cx="1465.08" cy="882" r="3" fill="#111"/>
<path d="M1465.08 683V881" stroke="#00ffff" stroke-width="4.200"/>
<ellipse cx="1465.08" cy="796" rx="2.700" ry="5.500" fill="none" stroke="#8a8a8a" stroke-width=".9"/>
<circle cx="1493.5" cy="882" r="3" fill="#111"/>
<path d="M1493.5 683V881" stroke="#90ee90" stroke-width="4.200"/>
<ellipse cx="1493.5" cy="796" rx="2.700" ry="5.500" fill="none" stroke="#8a8a8a" stroke-width=".9"/>
<circle cx="1521.92" cy="882" r="3" fill="#111"/>
<path d="M1521.92 683V881" stroke="#add8e6" stroke-width="4.200"/>
<ellipse cx="1521.92" cy="796" rx="2.700" ry="5.500" fill="none" stroke="#8a8a8a" stroke-width=".9"/>
<path d="M1430.66 782H1442.66L1436.66 795z" fill="#0000ff"/>
<path d="M1430.66 867H1442.66L1436.66 880z" fill="#0000ff"/>
<path d="M1434.66 793l2 3 2-3" fill="none" stroke="#fff" stroke-width=".8"/>
<path d="M1550.3 683V739" stroke="#ffb6c1" stroke-width="3.800"/>
<path d="M1546.8 737l3.500 3.500l3.500-3.500" fill="none" stroke="#ffb6c1" stroke-width="1.200"/>
<rect x="1546.8" y="741" width="7" height="6" rx="2" fill="#fff" stroke="#bbb" stroke-width=".6"/>
<path d="M1578.72 683V739" stroke="#ff1493" stroke-width="3.800"/>
<path d="M1575.22 737l3.500 3.500l3.500-3.500" fill="none" stroke="#ff1493" stroke-width="1.200"/>
<rect x="1575.22" y="741" width="7" height="6" rx="2" fill="#fff" stroke="#bbb" stroke-width=".6"/>
<path d="M1607.14 683V739" stroke="#a52a2a" stroke-width="3.800"/>
<path d="M1603.64 737l3.500 3.500l3.500-3.500" fill="none" stroke="#a52a2a" stroke-width="1.200"/>
<rect x="1603.64" y="741" width="7" height="6" rx="2" fill="#fff" stroke="#bbb" stroke-width=".6"/>
</svg>
</body>
</html>
